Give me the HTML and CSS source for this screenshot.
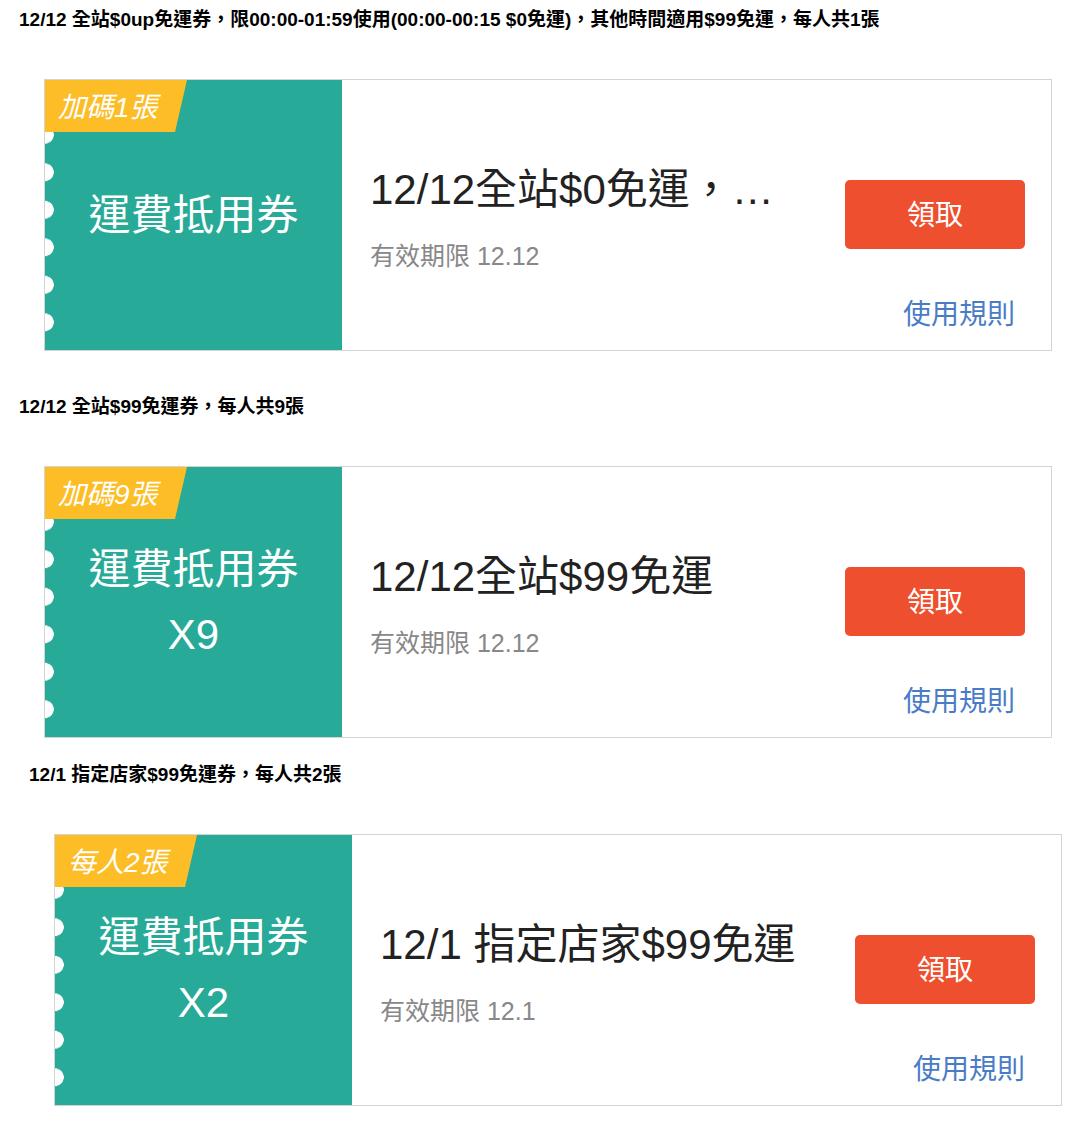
FILE: index.html
```html
<!DOCTYPE html>
<html lang="zh-Hant">
<head>
  <meta charset="UTF-8">
  <meta name="viewport" content="width=device-width, initial-scale=1.0">
  <title>運費抵用券</title>
  <link rel="stylesheet" href="styles.css">
</head>
<body>
  <section class="group">
    <h2 class="group-title">12/12 全站$0up免運券，限00:00-01:59使用(00:00-00:15 $0免運)，其他時間適用$99免運，每人共1張</h2>
    <div class="coupon">
      <div class="coupon-side">
        <span class="coupon-tag">加碼1張</span>
        <div class="coupon-name">運費抵用券</div>
      </div>
      <div class="coupon-body">
        <div class="coupon-info">
          <div class="coupon-title">12/12全站$0免運，限00:00-00:15使用</div>
          <div class="coupon-date">有效期限 12.12</div>
        </div>
        <div class="coupon-action">
          <button class="get-btn">領取</button>
          <a class="rule-link" href="#">使用規則</a>
        </div>
      </div>
    </div>
  </section>

  <section class="group">
    <h2 class="group-title">12/12 全站$99免運券，每人共9張</h2>
    <div class="coupon">
      <div class="coupon-side">
        <span class="coupon-tag">加碼9張</span>
        <div class="coupon-name">運費抵用券<br>X9</div>
      </div>
      <div class="coupon-body">
        <div class="coupon-info">
          <div class="coupon-title">12/12全站$99免運</div>
          <div class="coupon-date">有效期限 12.12</div>
        </div>
        <div class="coupon-action">
          <button class="get-btn">領取</button>
          <a class="rule-link" href="#">使用規則</a>
        </div>
      </div>
    </div>
  </section>

  <section class="group group-store">
    <h2 class="group-title">12/1 指定店家$99免運券，每人共2張</h2>
    <div class="coupon">
      <div class="coupon-side">
        <span class="coupon-tag">每人2張</span>
        <div class="coupon-name">運費抵用券<br>X2</div>
      </div>
      <div class="coupon-body">
        <div class="coupon-info">
          <div class="coupon-title">12/1 指定店家$99免運</div>
          <div class="coupon-date">有效期限 12.1</div>
        </div>
        <div class="coupon-action">
          <button class="get-btn">領取</button>
          <a class="rule-link" href="#">使用規則</a>
        </div>
      </div>
    </div>
  </section>
</body>
</html>
```

FILE: styles.css
```css
body {
  margin: 0;
  font-family: "Liberation Sans", "Noto Sans CJK TC", sans-serif;
  color: #000;
  background: #fff;
}
.group {
  padding-left: 19px;
  margin-top: 8px;
}
.group + .group {
  margin-top: 44px;
}
.group-store {
  padding-left: 29px;
}
.group + .group-store {
  margin-top: 25px;
}
.group-title {
  margin: 0;
  font-size: 19px;
  line-height: 24px;
  font-weight: bold;
}
.coupon {
  display: flex;
  width: 1006px;
  height: 270px;
  margin: 47px 0 0 25px;
  border: 1px solid #d4d4d4;
  background: #fff;
}
.coupon-side {
  position: relative;
  width: 297px;
  flex-shrink: 0;
  display: flex;
  align-items: center;
  justify-content: center;
  background:
    radial-gradient(circle at 0 50%, #fff 8.5px, transparent 9px) 0 36px / 18px 37.5px repeat-y,
    #27aa97;
}
.coupon-tag {
  position: absolute;
  top: 0;
  left: 0;
  box-sizing: border-box;
  width: 142px;
  height: 52px;
  padding: 2px 0 0 13px;
  line-height: 52px;
  font-size: 28px;
  font-style: italic;
  color: #fff;
  background: #fcbd27;
  clip-path: polygon(0 0, 100% 0, calc(100% - 12px) 100%, 0 100%);
}
.coupon-name {
  color: #fff;
  font-size: 42px;
  line-height: 65px;
  text-align: center;
}
.coupon-body {
  flex: 1;
  display: flex;
  min-width: 0;
}
.coupon-info {
  flex: 1;
  min-width: 0;
  padding: 85px 50px 0 28px;
}
.coupon-title {
  font-size: 42px;
  line-height: 50px;
  color: #222;
  white-space: nowrap;
  overflow: hidden;
  text-overflow: ellipsis;
}
.coupon-date {
  margin-top: 26px;
  font-size: 25px;
  line-height: 30px;
  color: #888;
}
.coupon-action {
  width: 180px;
  padding: 100px 26px 0 0;
  display: flex;
  flex-direction: column;
}
.get-btn {
  height: 69px;
  padding: 0 0 4px;
  border: none;
  border-radius: 5px;
  background: #ee4f2e;
  color: #fff;
  font-family: inherit;
  font-size: 28px;
  cursor: pointer;
}
.rule-link {
  margin: 49px 10px 0 0;
  text-align: right;
  font-size: 28px;
  line-height: 34px;
  color: #4a7cc6;
  text-decoration: none;
}
.rule-link:hover {
  text-decoration: underline;
}
```
